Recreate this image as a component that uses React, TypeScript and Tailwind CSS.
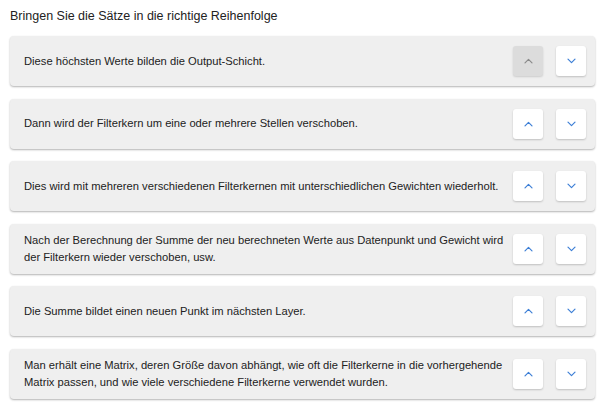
import React from "react";

const sentences = [
  "Diese höchsten Werte bilden die Output-Schicht.",
  "Dann wird der Filterkern um eine oder mehrere Stellen verschoben.",
  "Dies wird mit mehreren verschiedenen Filterkernen mit unterschiedlichen Gewichten wiederholt.",
  "Nach der Berechnung der Summe der neu berechneten Werte aus Datenpunkt und Gewicht wird der Filterkern wieder verschoben, usw.",
  "Die Summe bildet einen neuen Punkt im nächsten Layer.",
  "Man erhält eine Matrix, deren Größe davon abhängt, wie oft die Filterkerne in die vorhergehende Matrix passen, und wie viele verschiedene Filterkerne verwendet wurden.",
];

function Chevron({ up, color }: { up?: boolean; color: string }) {
  return (
    <svg width="9" height="6" viewBox="0 0 9 6" fill="none">
      <path
        d={up ? "M1 4.8L4.5 1.3L8 4.8" : "M1 1.2L4.5 4.7L8 1.2"}
        stroke={color}
        strokeWidth="1.2"
        strokeLinecap="round"
        strokeLinejoin="round"
      />
    </svg>
  );
}

export default function App() {
  return (
    <div className="w-[600px] h-[405px] bg-white pl-[10px] pr-[5px] pt-[8px] overflow-hidden" style={{ fontFamily: '"Liberation Sans", Arial, sans-serif' }}>
      <h1 className="text-[12.5px] leading-[16px] text-[#222]">Bringen Sie die Sätze in die richtige Reihenfolge</h1>
      <div className="mt-[12px] flex flex-col gap-[12.5px]">
        {sentences.map((s, i) => (
          <div
            key={i}
            className="flex items-center justify-between min-h-[50px] bg-[#efefef] rounded-[4px] pl-[14px] pr-[9px] py-[8px] shadow-[0_1px_2px_rgba(0,0,0,0.3)]"
          >
            <p className="text-[11.2px] leading-[17px] text-[#222] pr-[9px]">{s}</p>
            <div className="flex gap-[13px] shrink-0">
              {i === 0 ? (
                <button className="w-[30px] h-[30px] rounded-[3px] bg-[#dcdcdc] flex items-center justify-center shadow-[0_1px_2px_rgba(0,0,0,0.15)]">
                  <Chevron up color="#8a8a8a" />
                </button>
              ) : (
                <button className="w-[30px] h-[30px] rounded-[3px] bg-white flex items-center justify-center shadow-[0_1px_2px_rgba(0,0,0,0.2)]">
                  <Chevron up color="#3d7fd6" />
                </button>
              )}
              <button className="w-[30px] h-[30px] rounded-[3px] bg-white flex items-center justify-center shadow-[0_1px_2px_rgba(0,0,0,0.2)]">
                <Chevron color="#3d7fd6" />
              </button>
            </div>
          </div>
        ))}
      </div>
    </div>
  );
}
